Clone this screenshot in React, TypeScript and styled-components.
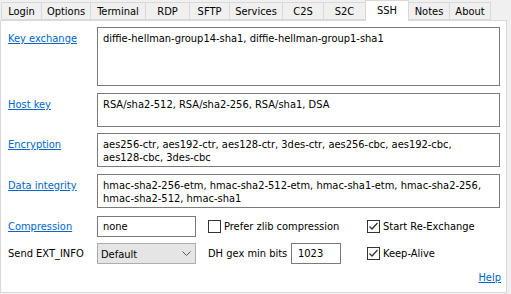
import styled, { createGlobalStyle } from "styled-components";

const Global = createGlobalStyle`
  html, body {
    margin: 0;
    padding: 0;
    background: #f0f0f0;
  }
  body {
    font-family: "DejaVu Sans Condensed", "DejaVu Sans", sans-serif;
    font-size: 11px;
    color: #000000;
  }
`;

const Window = styled.div`
  width: 511px;
  height: 294px;
  background: #f0f0f0;
  display: flex;
  flex-direction: column;
`;

const TabStrip = styled.div`
  display: flex;
  align-items: flex-end;
  height: 20px;
  padding-left: 2px;
  position: relative;
  z-index: 1;
`;

const Tab = styled.div<{ $w: number; $active?: boolean }>`
  width: ${(p) => p.$w}px;
  box-sizing: border-box;
  height: ${(p) => (p.$active ? 21 : 18)}px;
  margin-bottom: ${(p) => (p.$active ? -1 : 0)}px;
  display: flex;
  align-items: ${(p) => (p.$active ? "flex-start" : "center")};
  padding-top: ${(p) => (p.$active ? 3 : 1)}px;
  justify-content: center;
  background: ${(p) => (p.$active ? "#ffffff" : "#f0f0f0")};
  border: 1px solid #d9d9d9;
  border-bottom: ${(p) => (p.$active ? "none" : "1px solid #d9d9d9")};
  margin-left: -1px;
`;

const Panel = styled.div`
  width: 507px;
  height: 273px;
  box-sizing: border-box;
  background: #ffffff;
  border: 1px solid #d9d9d9;
  display: flex;
  flex-direction: column;
  padding: 6px 5px 0 7px;
`;

const Field = styled.div<{ $mt?: number }>`
  display: grid;
  grid-template-columns: 89px 403px;
  align-items: start;
  margin-top: ${(p) => p.$mt ?? 0}px;
`;

const LinkLabel = styled.a<{ $pt?: number }>`
  color: #0066cc;
  text-decoration: underline;
  cursor: pointer;
  padding-top: ${(p) => p.$pt ?? 5}px;
`;

const Box = styled.div<{ $h: number }>`
  height: ${(p) => p.$h}px;
  box-sizing: border-box;
  border: 1px solid #7a7a7a;
  padding: 4px 5px;
  line-height: 13px;
  white-space: pre-wrap;
`;

const Bottom = styled.div`
  display: grid;
  grid-template-columns: 89px 99px 12px 83px 50px 26px auto;
  grid-auto-rows: 21px;
  row-gap: 6px;
  align-items: center;
  margin-top: 8px;
`;

const PlainLabel = styled.span<{ $col?: string }>`
  grid-column: ${(p) => p.$col ?? "auto"};
`;

const Input = styled.div<{ $pl: number; $col?: string }>`
  grid-column: ${(p) => p.$col ?? "auto"};
  height: 21px;
  box-sizing: border-box;
  border: 1px solid #7a7a7a;
  padding: 3px 4px 0 ${(p) => p.$pl}px;
`;

const Select = styled.div`
  height: 21px;
  box-sizing: border-box;
  border: 1px solid #adadad;
  background: #e5e5e5;
  display: flex;
  align-items: center;
  justify-content: space-between;
  padding: 1px 4px 0 3px;
`;

const Check = styled.label<{ $col: string }>`
  grid-column: ${(p) => p.$col};
  display: flex;
  align-items: center;
  gap: 3px;
`;

const Box13 = styled.span`
  width: 13px;
  height: 13px;
  box-sizing: border-box;
  border: 1px solid #333333;
  background: #ffffff;
  display: flex;
  align-items: center;
  justify-content: center;
`;

const Footer = styled.div`
  display: flex;
  justify-content: flex-end;
  margin-top: 7px;
`;

const HelpLink = styled.a`
  color: #0066cc;
  text-decoration: underline;
`;

const tabs: [string, number][] = [
  ["Login", 41],
  ["Options", 50],
  ["Terminal", 56],
  ["RDP", 45],
  ["SFTP", 41],
  ["Services", 54],
  ["C2S", 42],
  ["S2C", 43],
  ["SSH", 44],
  ["Notes", 42],
  ["About", 42],
];

function CheckBox({ checked }: { checked?: boolean }) {
  return (
    <Box13>
      {checked && (
        <svg width="11" height="11" viewBox="0 0 11 11">
          <path d="M1.5 5.5 L4 8 L9.5 2" stroke="#333333" strokeWidth="1.3" fill="none" />
        </svg>
      )}
    </Box13>
  );
}

export default function App() {
  return (
    <Window>
      <Global />
      <TabStrip>
        {tabs.map(([name, w]) => (
          <Tab key={name} $w={w} $active={name === "SSH"}>
            {name}
          </Tab>
        ))}
      </TabStrip>
      <Panel>
        <Field>
          <LinkLabel>Key exchange</LinkLabel>
          <Box $h={59}>diffie-hellman-group14-sha1, diffie-hellman-group1-sha1</Box>
        </Field>
        <Field $mt={7}>
          <LinkLabel>Host key</LinkLabel>
          <Box $h={34}>RSA/sha2-512, RSA/sha2-256, RSA/sha1, DSA</Box>
        </Field>
        <Field $mt={6}>
          <LinkLabel>Encryption</LinkLabel>
          <Box $h={34}>
            {"aes256-ctr, aes192-ctr, aes128-ctr, 3des-ctr, aes256-cbc, aes192-cbc,\naes128-cbc, 3des-cbc"}
          </Box>
        </Field>
        <Field $mt={7}>
          <LinkLabel>Data integrity</LinkLabel>
          <Box $h={34}>
            {"hmac-sha2-256-etm, hmac-sha2-512-etm, hmac-sha1-etm, hmac-sha2-256,\nhmac-sha2-512, hmac-sha1"}
          </Box>
        </Field>
        <Bottom>
          <LinkLabel $pt={0}>Compression</LinkLabel>
          <Input $pl={5}>none</Input>
          <Check $col="4 / 6">
            <CheckBox />
            <span>Prefer zlib compression</span>
          </Check>
          <Check $col="7">
            <CheckBox checked />
            <span>Start Re-Exchange</span>
          </Check>
          <PlainLabel>Send EXT_INFO</PlainLabel>
          <Select>
            <span>Default</span>
            <svg width="9" height="6" viewBox="0 0 9 6">
              <path d="M0.5 0.5 L4.5 4.5 L8.5 0.5" stroke="#555555" strokeWidth="1" fill="none" />
            </svg>
          </Select>
          <PlainLabel $col="4">DH gex min bits</PlainLabel>
          <Input $pl={6} $col="5">1023</Input>
          <Check $col="7">
            <CheckBox checked />
            <span>Keep-Alive</span>
          </Check>
        </Bottom>
        <Footer>
          <HelpLink>Help</HelpLink>
        </Footer>
      </Panel>
    </Window>
  );
}
